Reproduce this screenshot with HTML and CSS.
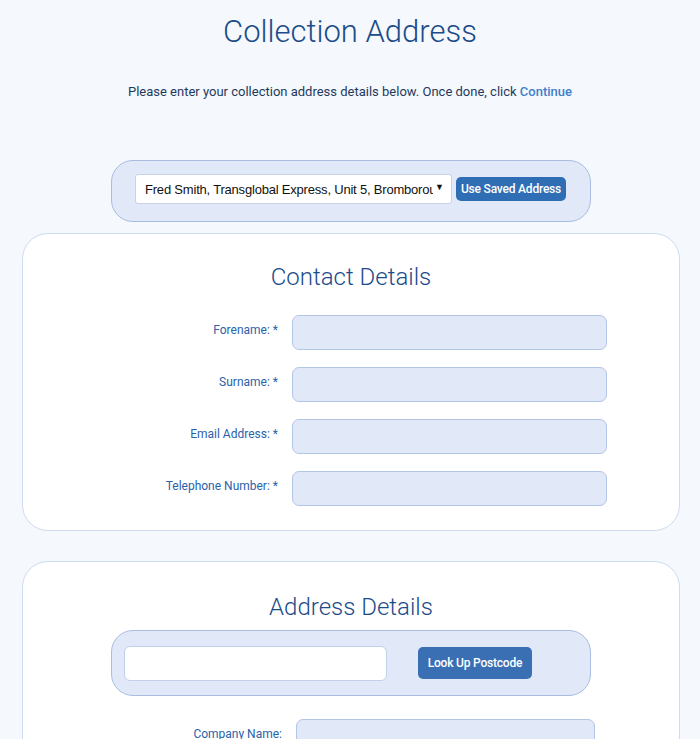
FILE: index.html
```html
<!DOCTYPE html>
<html lang="en">
<head>
<meta charset="utf-8">
<title>Collection Address</title>
<link rel="stylesheet" href="styles.css">
</head>
<body>
<main class="page">
  <h1 class="page-title">Collection Address</h1>
  <p class="intro">Please enter your collection address details below. Once done, click <span class="intro-link">Continue</span></p>

  <div class="saved-box">
    <div class="select-wrap">
      <select class="saved-select">
        <option>Fred Smith, Transglobal Express, Unit 5, Bromborough, Wirral</option>
      </select>
      <span class="select-arrow">&#9660;</span>
    </div>
    <button class="btn btn-saved" type="button">Use Saved Address</button>
  </div>

  <section class="card card-contact">
    <h2 class="card-title">Contact Details</h2>
    <div class="form-grid">
      <label class="field-label">Forename: *</label>
      <input class="field-input" type="text">
      <label class="field-label">Surname: *</label>
      <input class="field-input" type="text">
      <label class="field-label">Email Address: *</label>
      <input class="field-input" type="text">
      <label class="field-label">Telephone Number: *</label>
      <input class="field-input" type="text">
    </div>
  </section>

  <section class="card card-address">
    <h2 class="card-title">Address Details</h2>
    <div class="postcode-box">
      <input class="postcode-input" type="text">
      <button class="btn btn-lookup" type="button">Look Up Postcode</button>
    </div>
    <div class="form-grid form-grid-address">
      <label class="field-label">Company Name:</label>
      <input class="field-input" type="text">
    </div>
  </section>
</main>
</body>
</html>
```

FILE: styles.css
```css
html, body {
  margin: 0;
  padding: 0;
}

body {
  background: #f5f8fc;
  font-family: Roboto, "Liberation Sans", Arial, sans-serif;
  color: #1f3a5f;
}

.page {
  padding-top: 13px;
  padding-bottom: 40px;
}

.page-title {
  margin: 0;
  text-align: center;
  font-size: 31px;
  line-height: 38px;
  font-weight: 300;
  color: #1b4c8a;
}

.intro {
  margin: 33px 0 0;
  text-align: center;
  font-size: 13px;
  line-height: 16px;
  color: #1f3a5f;
}

.intro-link {
  color: #3f7fcb;
  font-weight: 500;
}

.saved-box {
  width: 480px;
  height: 62px;
  box-sizing: border-box;
  margin: 60px auto 0;
  position: relative;
  left: 1px;
  display: flex;
  align-items: center;
  padding: 0 24px 4px 23px;
  gap: 4px;
  background: #e1e8f7;
  border: 1px solid #a9bde0;
  border-radius: 22px;
}

.select-wrap {
  width: 317px;
  height: 30px;
  box-sizing: border-box;
  display: flex;
  align-items: center;
  padding: 0 7px 0 9px;
  background: #ffffff;
  border: 1px solid #c8d3e4;
  border-radius: 3px;
}

.saved-select {
  flex: 1;
  min-width: 0;
  -webkit-appearance: none;
  appearance: none;
  border: 0;
  outline: none;
  background: transparent;
  padding: 0;
  margin: 0;
  font-family: "Liberation Sans", Arial, sans-serif;
  font-size: 13px;
  letter-spacing: -0.2px;
  color: #111111;
}

.select-arrow {
  font-size: 9px;
  color: #111111;
  margin-left: 2px;
  line-height: 1;
  position: relative;
  top: -2px;
}

.btn {
  border: 0;
  color: #ffffff;
  background: #2f6db5;
  font-family: Roboto, "Liberation Sans", Arial, sans-serif;
  font-weight: 500;
  font-size: 12px;
  letter-spacing: -0.2px;
  padding: 0;
  cursor: pointer;
}

.btn-saved {
  width: 110px;
  height: 24px;
  border-radius: 5px;
}

.card {
  background: #ffffff;
  border: 1px solid #cfdbee;
  border-radius: 26px;
  margin: 0 20px 0 22px;
}

.card-contact {
  margin-top: 11px;
  height: 298px;
  box-sizing: border-box;
}

.card-address {
  margin-top: 30px;
  height: 240px;
  box-sizing: border-box;
}

.card-title {
  margin: 29px 0 0;
  text-align: center;
  font-size: 24px;
  line-height: 28px;
  font-weight: 300;
  color: #1b4c8a;
}

.card-address .card-title {
  margin-top: 31px;
}

.form-grid {
  display: grid;
  grid-template-columns: 255px 315px;
  column-gap: 14px;
  row-gap: 17px;
  align-items: center;
  margin-top: 24px;
}

.field-label {
  text-align: right;
  font-size: 12px;
  color: #2a62aa;
  padding-bottom: 5px;
}

.field-input {
  height: 35px;
  box-sizing: border-box;
  margin: 0;
  background: #e1e9f8;
  border: 1px solid #b3c5e6;
  border-radius: 7px;
  outline: none;
}

.form-grid-address {
  grid-template-columns: 259px 299px;
  margin-top: 23px;
  align-items: start;
}

.form-grid-address .field-label {
  padding-bottom: 0;
  padding-top: 8px;
}

.postcode-box {
  width: 480px;
  height: 66px;
  box-sizing: border-box;
  margin: 9px auto 0;
  display: flex;
  align-items: center;
  padding: 0 12px;
  background: #e1e8f7;
  border: 1px solid #a9bde0;
  border-radius: 22px;
}

.postcode-input {
  width: 263px;
  height: 35px;
  box-sizing: border-box;
  margin: 0;
  background: #ffffff;
  border: 1px solid #c3d0e8;
  border-radius: 6px;
  outline: none;
}

.btn-lookup {
  width: 114px;
  height: 32px;
  border-radius: 5px;
  margin-left: 31px;
  margin-top: 0;
  background: #3a6fb3;
}
```
